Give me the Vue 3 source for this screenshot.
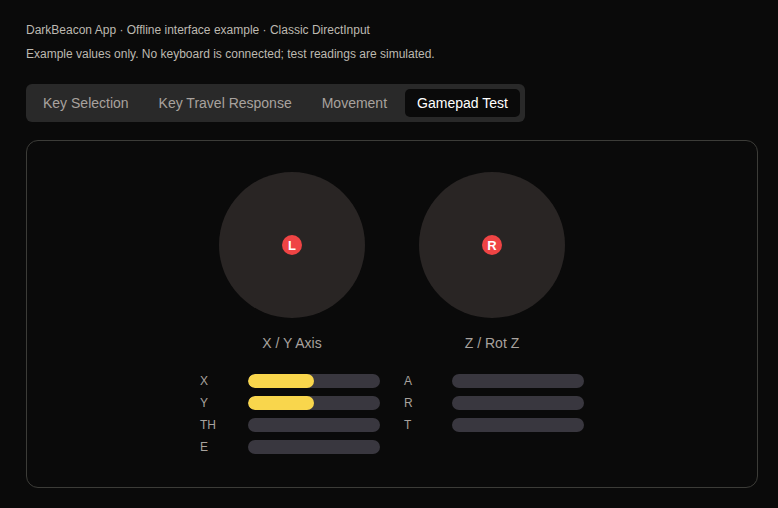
<template>
  <div class="page">
    <p class="meta meta--first">DarkBeacon App · Offline interface example · Classic DirectInput</p>
    <p class="meta">Example values only. No keyboard is connected; test readings are simulated.</p>

    <nav class="tabs">
      <button
        v-for="tab in tabs"
        :key="tab"
        class="tabs__item"
        :class="{ 'tabs__item--active': tab === activeTab }"
        @click="activeTab = tab"
      >
        {{ tab }}
      </button>
    </nav>

    <section class="panel">
      <div class="sticks">
        <div v-for="stick in sticks" :key="stick.knob" class="stick">
          <div class="stick__pad">
            <span class="stick__knob">{{ stick.knob }}</span>
          </div>
          <span class="stick__label">{{ stick.label }}</span>
        </div>
      </div>

      <div class="axes">
        <div v-for="(column, i) in axes" :key="i" class="axes__column">
          <div v-for="axis in column" :key="axis.name" class="axis">
            <span class="axis__name">{{ axis.name }}</span>
            <div class="axis__track">
              <div class="axis__fill" :style="{ width: axis.value + '%' }"></div>
            </div>
          </div>
        </div>
      </div>
    </section>
  </div>
</template>

<script setup>
import { ref } from 'vue'

const tabs = ['Key Selection', 'Key Travel Response', 'Movement', 'Gamepad Test']
const activeTab = ref('Gamepad Test')

const sticks = [
  { knob: 'L', label: 'X / Y Axis' },
  { knob: 'R', label: 'Z / Rot Z' }
]

const axes = [
  [
    { name: 'X', value: 50 },
    { name: 'Y', value: 50 },
    { name: 'TH', value: 0 },
    { name: 'E', value: 0 }
  ],
  [
    { name: 'A', value: 0 },
    { name: 'R', value: 0 },
    { name: 'T', value: 0 }
  ]
]
</script>

<style>
html,
body {
  background-color: #0a0a0a;
}
</style>

<style scoped>
.page {
  box-sizing: border-box;
  width: 778px;
  height: 508px;
  padding: 23px 20px 20px 26px;
  background-color: #0a0a0a;
  font-family: 'Liberation Sans', Arial, sans-serif;
  overflow: hidden;
}

.meta {
  margin: 0 0 10px;
  font-size: 12px;
  line-height: 14px;
  color: #bdb9b1;
}

.tabs {
  display: inline-flex;
  gap: 6px;
  margin-top: 13px;
  padding: 5px;
  background-color: #292929;
  border-radius: 6px;
  vertical-align: top;
}

.tabs__item {
  height: 28px;
  padding: 0 12px;
  background: transparent;
  border: none;
  border-radius: 5px;
  font-family: inherit;
  font-size: 14px;
  color: #a8a29e;
  cursor: pointer;
}

.tabs__item--active {
  background-color: #0a0a0a;
  color: #ffffff;
}

.panel {
  box-sizing: border-box;
  display: flex;
  flex-direction: column;
  align-items: center;
  width: 732px;
  height: 348px;
  margin-top: 18px;
  padding-top: 31px;
  border: 1px solid #3c3c38;
  border-radius: 12px;
}

.sticks {
  display: flex;
  gap: 54px;
}

.stick {
  display: flex;
  flex-direction: column;
  align-items: center;
  gap: 17px;
}

.stick__pad {
  display: flex;
  align-items: center;
  justify-content: center;
  width: 146px;
  height: 146px;
  background-color: #292524;
  border-radius: 50%;
}

.stick__knob {
  display: flex;
  align-items: center;
  justify-content: center;
  width: 20px;
  height: 20px;
  background-color: #ef4444;
  border-radius: 50%;
  font-size: 13px;
  font-weight: 700;
  color: #ffffff;
}

.stick__label {
  font-size: 14px;
  line-height: 16px;
  color: #a8a29e;
}

.axes {
  display: flex;
  gap: 24px;
  margin-top: 23px;
}

.axes__column {
  display: flex;
  flex-direction: column;
  gap: 8px;
  width: 180px;
}

.axis {
  display: flex;
  align-items: center;
  height: 14px;
}

.axis__name {
  width: 48px;
  font-size: 12px;
  color: #a8a29e;
}

.axis__track {
  width: 132px;
  height: 14px;
  background-color: #39373f;
  border-radius: 7px;
  overflow: hidden;
}

.axis__fill {
  height: 100%;
  background-color: #f9d64c;
  border-radius: 7px;
}
</style>
